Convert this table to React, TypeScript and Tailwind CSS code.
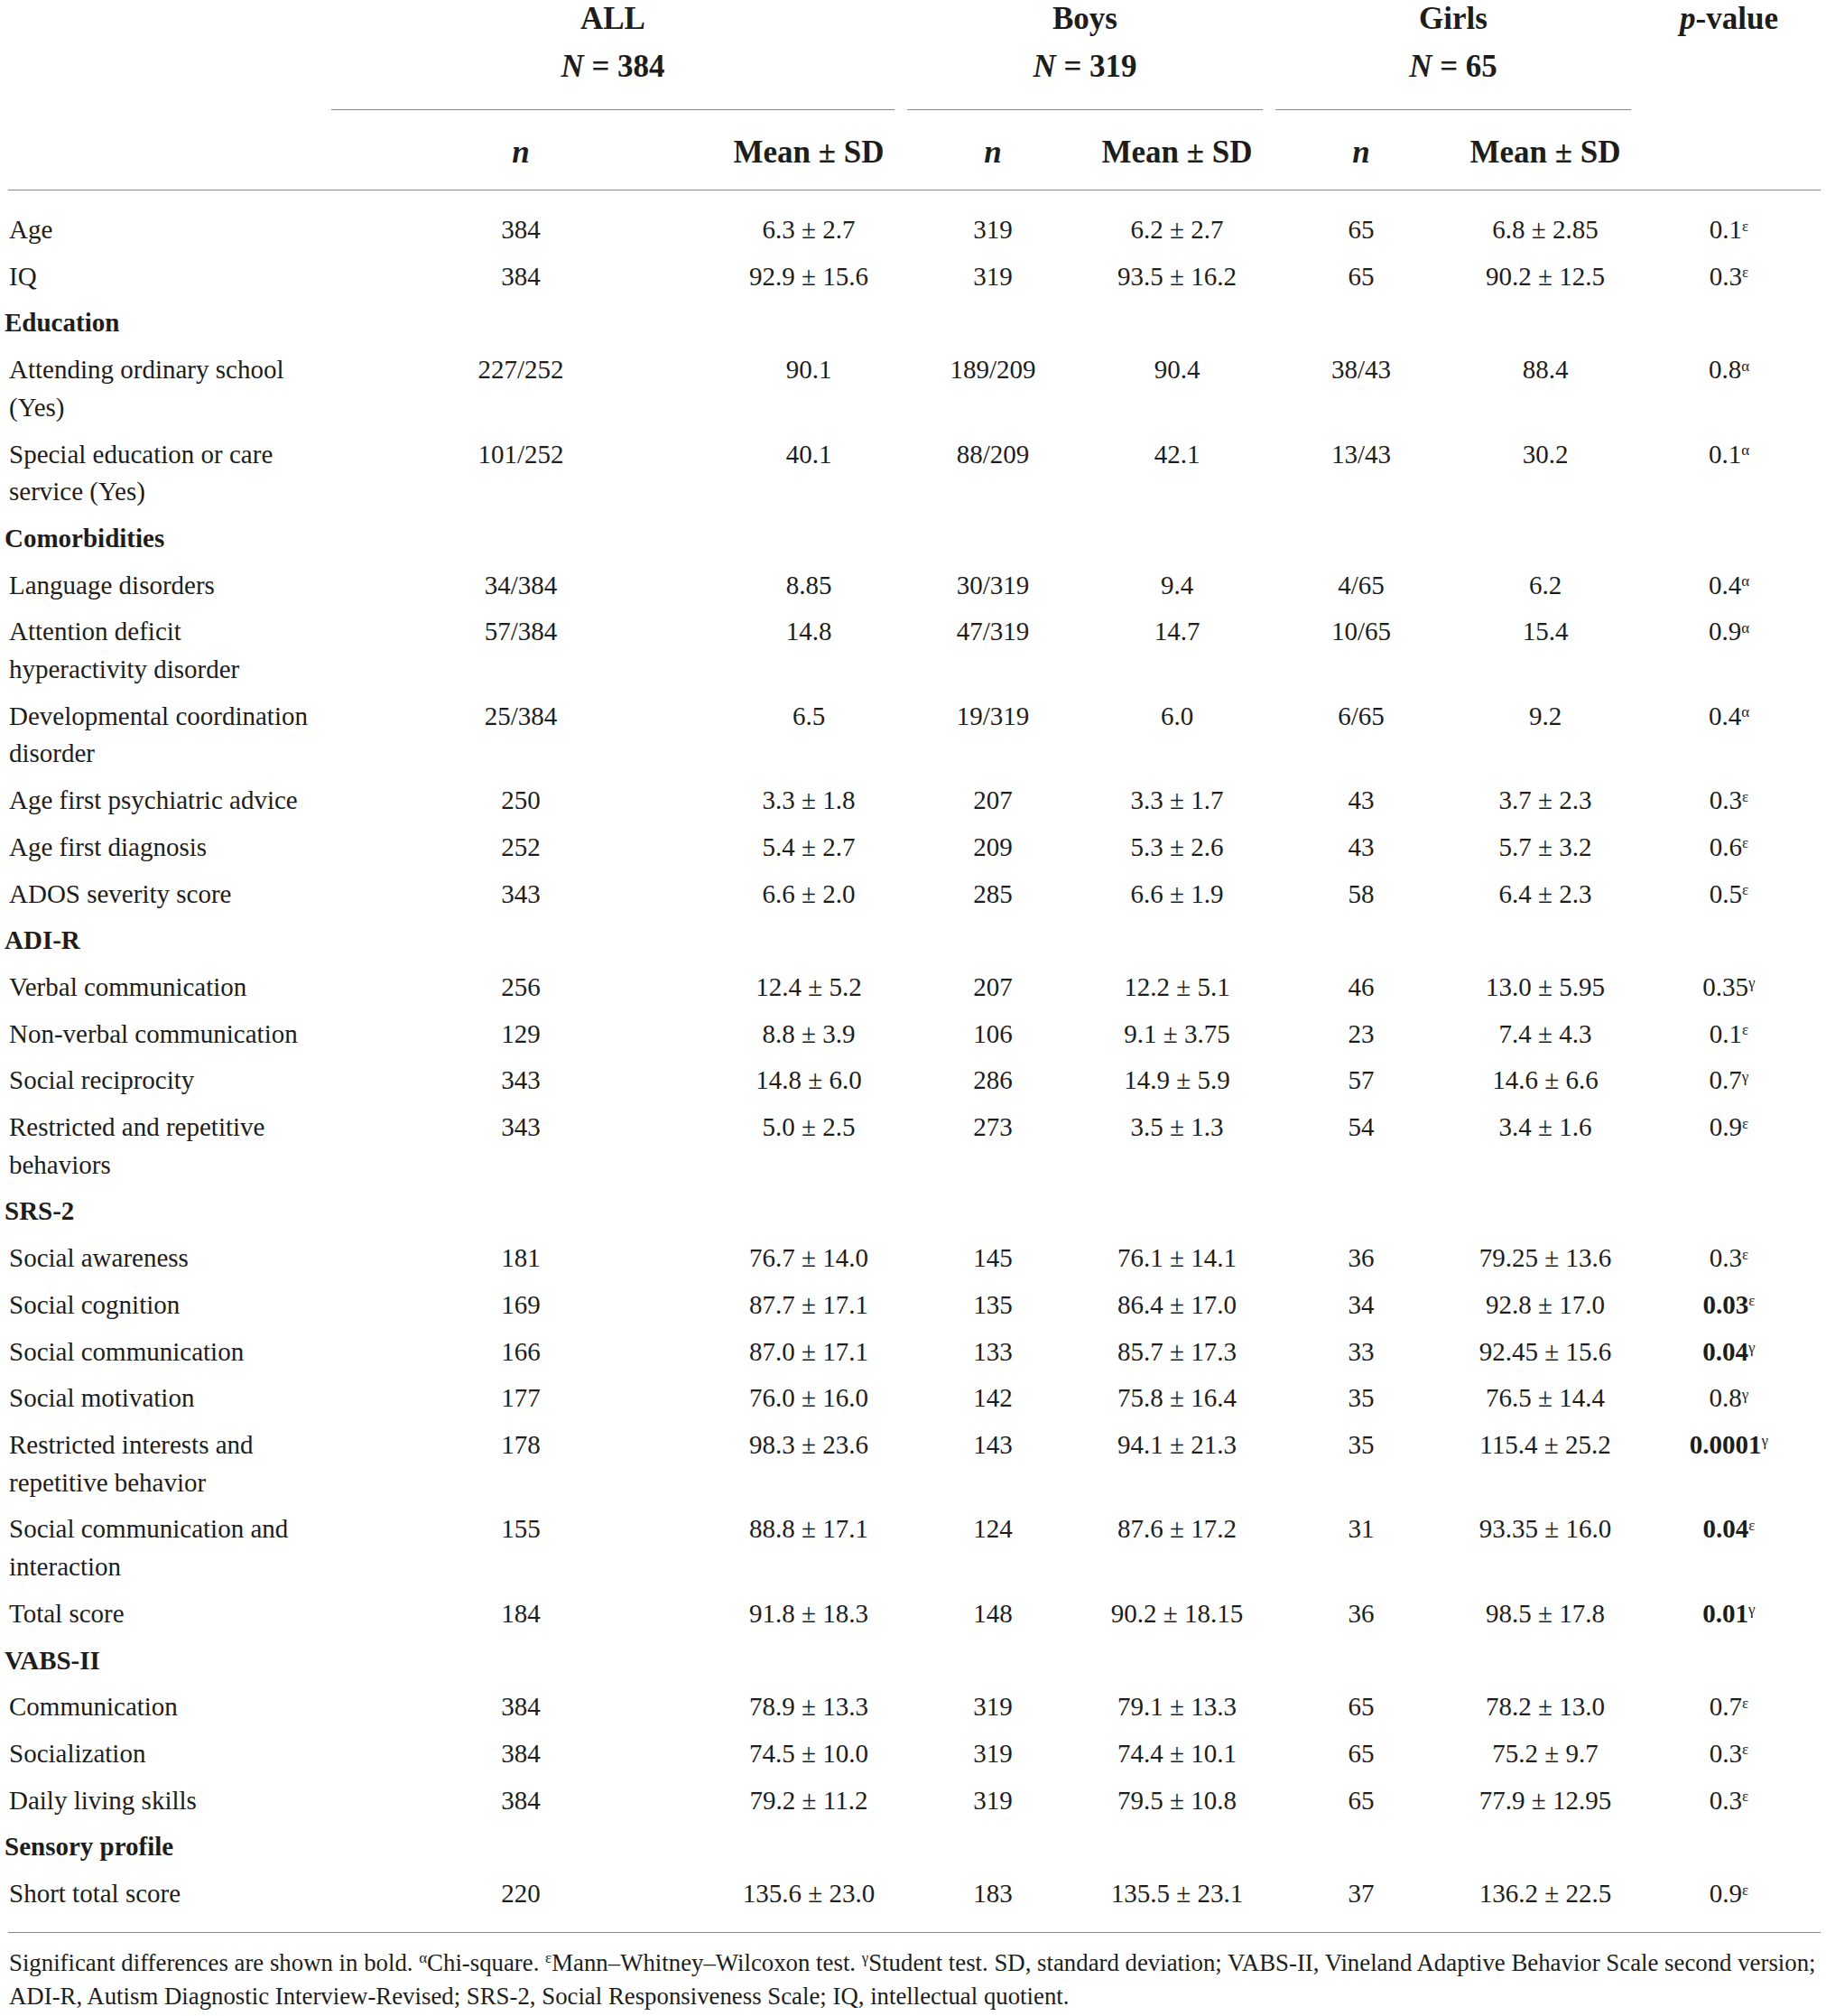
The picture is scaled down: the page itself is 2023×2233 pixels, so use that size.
import React from 'react';

type Row =
  | { section: string }
  | { label: string[]; v: string[]; p: string; s: string; bold?: boolean };

const rows: Row[] = [
  { label: ['Age'], v: ['384', '6.3 ± 2.7', '319', '6.2 ± 2.7', '65', '6.8 ± 2.85'], p: '0.1', s: 'ε' },
  { label: ['IQ'], v: ['384', '92.9 ± 15.6', '319', '93.5 ± 16.2', '65', '90.2 ± 12.5'], p: '0.3', s: 'ε' },
  { section: 'Education' },
  { label: ['Attending ordinary school', '(Yes)'], v: ['227/252', '90.1', '189/209', '90.4', '38/43', '88.4'], p: '0.8', s: 'α' },
  { label: ['Special education or care', 'service (Yes)'], v: ['101/252', '40.1', '88/209', '42.1', '13/43', '30.2'], p: '0.1', s: 'α' },
  { section: 'Comorbidities' },
  { label: ['Language disorders'], v: ['34/384', '8.85', '30/319', '9.4', '4/65', '6.2'], p: '0.4', s: 'α' },
  { label: ['Attention deficit', 'hyperactivity disorder'], v: ['57/384', '14.8', '47/319', '14.7', '10/65', '15.4'], p: '0.9', s: 'α' },
  { label: ['Developmental coordination', 'disorder'], v: ['25/384', '6.5', '19/319', '6.0', '6/65', '9.2'], p: '0.4', s: 'α' },
  { label: ['Age first psychiatric advice'], v: ['250', '3.3 ± 1.8', '207', '3.3 ± 1.7', '43', '3.7 ± 2.3'], p: '0.3', s: 'ε' },
  { label: ['Age first diagnosis'], v: ['252', '5.4 ± 2.7', '209', '5.3 ± 2.6', '43', '5.7 ± 3.2'], p: '0.6', s: 'ε' },
  { label: ['ADOS severity score'], v: ['343', '6.6 ± 2.0', '285', '6.6 ± 1.9', '58', '6.4 ± 2.3'], p: '0.5', s: 'ε' },
  { section: 'ADI-R' },
  { label: ['Verbal communication'], v: ['256', '12.4 ± 5.2', '207', '12.2 ± 5.1', '46', '13.0 ± 5.95'], p: '0.35', s: 'γ' },
  { label: ['Non-verbal communication'], v: ['129', '8.8 ± 3.9', '106', '9.1 ± 3.75', '23', '7.4 ± 4.3'], p: '0.1', s: 'ε' },
  { label: ['Social reciprocity'], v: ['343', '14.8 ± 6.0', '286', '14.9 ± 5.9', '57', '14.6 ± 6.6'], p: '0.7', s: 'γ' },
  { label: ['Restricted and repetitive', 'behaviors'], v: ['343', '5.0 ± 2.5', '273', '3.5 ± 1.3', '54', '3.4 ± 1.6'], p: '0.9', s: 'ε' },
  { section: 'SRS-2' },
  { label: ['Social awareness'], v: ['181', '76.7 ± 14.0', '145', '76.1 ± 14.1', '36', '79.25 ± 13.6'], p: '0.3', s: 'ε' },
  { label: ['Social cognition'], v: ['169', '87.7 ± 17.1', '135', '86.4 ± 17.0', '34', '92.8 ± 17.0'], p: '0.03', s: 'ε', bold: true },
  { label: ['Social communication'], v: ['166', '87.0 ± 17.1', '133', '85.7 ± 17.3', '33', '92.45 ± 15.6'], p: '0.04', s: 'γ', bold: true },
  { label: ['Social motivation'], v: ['177', '76.0 ± 16.0', '142', '75.8 ± 16.4', '35', '76.5 ± 14.4'], p: '0.8', s: 'γ' },
  { label: ['Restricted interests and', 'repetitive behavior'], v: ['178', '98.3 ± 23.6', '143', '94.1 ± 21.3', '35', '115.4 ± 25.2'], p: '0.0001', s: 'γ', bold: true },
  { label: ['Social communication and', 'interaction'], v: ['155', '88.8 ± 17.1', '124', '87.6 ± 17.2', '31', '93.35 ± 16.0'], p: '0.04', s: 'ε', bold: true },
  { label: ['Total score'], v: ['184', '91.8 ± 18.3', '148', '90.2 ± 18.15', '36', '98.5 ± 17.8'], p: '0.01', s: 'γ', bold: true },
  { section: 'VABS-II' },
  { label: ['Communication'], v: ['384', '78.9 ± 13.3', '319', '79.1 ± 13.3', '65', '78.2 ± 13.0'], p: '0.7', s: 'ε' },
  { label: ['Socialization'], v: ['384', '74.5 ± 10.0', '319', '74.4 ± 10.1', '65', '75.2 ± 9.7'], p: '0.3', s: 'ε' },
  { label: ['Daily living skills'], v: ['384', '79.2 ± 11.2', '319', '79.5 ± 10.8', '65', '77.9 ± 12.95'], p: '0.3', s: 'ε' },
  { section: 'Sensory profile' },
  { label: ['Short total score'], v: ['220', '135.6 ± 23.0', '183', '135.5 ± 23.1', '37', '136.2 ± 22.5'], p: '0.9', s: 'ε' },
];

const cols = 'grid grid-cols-[351px_434px_204px_204px_204px_204px_204px_203px]';

const groups = [
  { name: 'ALL', n: '384' },
  { name: 'Boys', n: '319' },
  { name: 'Girls', n: '65' },
];

const Sup = ({ children }: { children: React.ReactNode }) => (
  <sup className="text-[17px] font-normal">{children}</sup>
);

export default function App() {
  return (
    <div className="h-[2233px] w-[2023px] overflow-hidden bg-white pl-[9px] font-['Liberation_Serif','Times_New_Roman',serif] text-[#1d1d1b]">
      <div className="w-[2008px]">
        {/* header */}
        <div className={`${cols} text-[35px] font-bold leading-[53px]`}>
          <div />
          {groups.map((g) => (
            <div key={g.name} className="col-span-2 flex flex-col items-center">
              <div className="-mt-[6px] text-center">
                <div>{g.name}</div>
                <div>
                  <i>N</i> = {g.n}
                </div>
              </div>
              <div className="mt-[21px] h-px self-stretch mx-[7px] bg-[#8a8a8a]" />
            </div>
          ))}
          <div className="-mt-[6px] text-center">
            <i>p</i>-value
          </div>
        </div>
        <div className={`${cols} pt-[20px] pb-[15px] text-center text-[35px] font-bold leading-[53px]`}>
          <div />
          {groups.map((g) => (
            <React.Fragment key={g.name}>
              <div>
                <i>n</i>
              </div>
              <div>Mean ± SD</div>
            </React.Fragment>
          ))}
          <div />
        </div>
        <div className="h-px bg-[#8a8a8a]" />

        {/* body */}
        <div className="pt-[18px] pb-[16px] text-[29px] leading-[41.7px]">
          {rows.map((r, i) =>
            'section' in r ? (
              <div key={i} className="-ml-[4px] py-[5px] font-bold">
                {r.section}
              </div>
            ) : (
              <div key={i} className={`${cols} py-[5px] items-start`}>
                <div className="pl-px">
                  {r.label.map((l, j) => (
                    <div key={j}>{l}</div>
                  ))}
                </div>
                {r.v.map((v, j) => (
                  <div key={j} className="text-center">
                    {v}
                  </div>
                ))}
                <div className="text-center">
                  <span className={r.bold ? 'font-bold' : ''}>{r.p}</span>
                  <Sup>{r.s}</Sup>
                </div>
              </div>
            )
          )}
        </div>
        <div className="h-px bg-[#8a8a8a]" />

        {/* footnote */}
        <div className="pt-[15px] pl-px text-[26.8px] leading-[37px]">
          <div className="whitespace-nowrap">
            Significant differences are shown in bold. <Sup>α</Sup>Chi-square. <Sup>ε</Sup>Mann–Whitney–Wilcoxon test.{' '}
            <Sup>γ</Sup>Student test. SD, standard deviation; VABS-II, Vineland Adaptive Behavior Scale second version;
          </div>
          <div className="whitespace-nowrap">
            ADI-R, Autism Diagnostic Interview-Revised; SRS-2, Social Responsiveness Scale; IQ, intellectual quotient.
          </div>
        </div>
      </div>
    </div>
  );
}
